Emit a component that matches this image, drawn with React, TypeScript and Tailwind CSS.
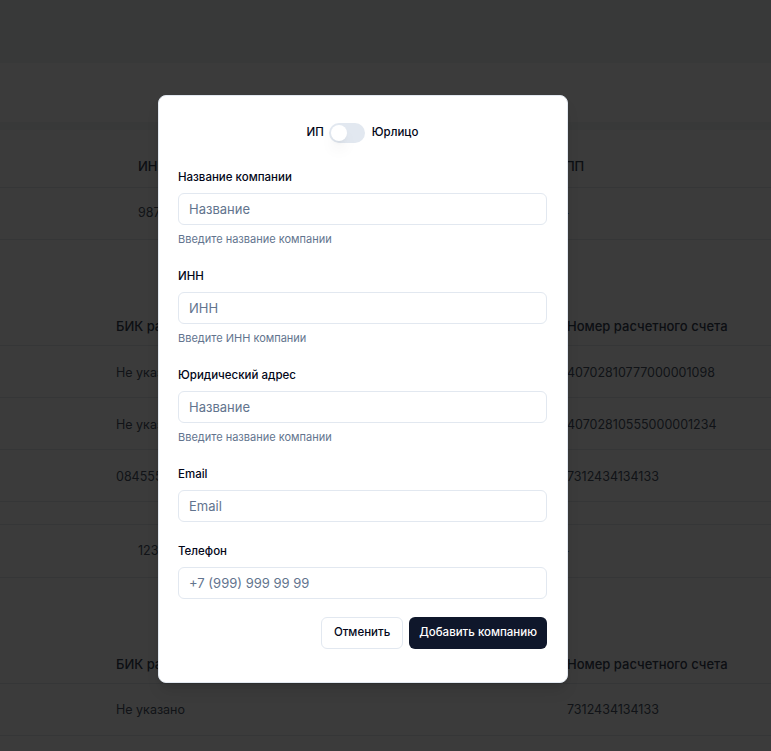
import { useState } from "react";

const font = { fontFamily: "Inter, 'Noto Sans', sans-serif" };

const BIK_ROWS = [
  { bik: "Не указано", account: "40702810777000001098" },
  { bik: "Не указано", account: "40702810555000001234" },
  { bik: "084555123", account: "7312434134133" },
];

function Field({ label, placeholder, hint }: { label: string; placeholder: string; hint?: string }) {
  return (
    <div className="flex flex-col">
      <label className="text-[11.5px] leading-4 font-medium text-slate-950 mb-2">{label}</label>
      <input
        placeholder={placeholder}
        className="h-8 w-full rounded-md border border-slate-200 bg-white px-2.5 text-[13px] text-slate-900 placeholder:text-slate-500 outline-none"
      />
      {hint && <p className="mt-1.5 text-[11px] leading-4 text-slate-500">{hint}</p>}
    </div>
  );
}

export default function App() {
  const [legal, setLegal] = useState(false);

  return (
    <div className="relative h-[751px] w-full overflow-hidden bg-white text-[12.5px] text-gray-600" style={font}>
      {/* page behind the dialog */}
      <div className="h-[63px] bg-gray-100" />
      <div className="h-[59px] bg-white" />
      <div className="h-[8px] bg-gray-100" />

      <div className="grid grid-cols-[418px_1fr] pl-[138px] pt-4 h-[58px] items-center border-b border-gray-200 text-[13px] font-medium text-gray-700">
        <span>ИНН</span>
        <span>КПП</span>
      </div>
      <div className="grid grid-cols-[418px_1fr] pl-[138px] h-[52px] items-center border-b border-gray-200">
        <span>9876543210</span>
        <span>—</span>
      </div>

      <div className="h-[60px]" />

      <div className="grid grid-cols-[451px_1fr] pl-[116px] pt-2 h-[46px] items-center border-b border-gray-200 text-[13px] font-medium text-gray-700">
        <span>БИК расчетного счета</span>
        <span>Номер расчетного счета</span>
      </div>
      {BIK_ROWS.map((r, i) => (
        <div key={i} className="grid grid-cols-[451px_1fr] pl-[116px] pt-1 h-[52px] items-center border-b border-gray-200">
          <span>{r.bik}</span>
          <span>{r.account}</span>
        </div>
      ))}
      <div className="h-[23px] border-b border-gray-200" />
      <div className="grid grid-cols-[418px_1fr] pl-[138px] h-[53px] items-center border-b border-gray-200">
        <span>1234567890</span>
        <span>—</span>
      </div>

      <div className="h-[61px]" />

      <div className="grid grid-cols-[451px_1fr] pl-[116px] pt-2 h-[45px] items-center border-b border-gray-200 text-[13px] font-medium text-gray-700">
        <span>БИК расчетного счета</span>
        <span>Номер расчетного счета</span>
      </div>
      <div className="grid grid-cols-[451px_1fr] pl-[116px] pt-0.5 h-[52px] items-center border-b border-gray-200">
        <span>Не указано</span>
        <span>7312434134133</span>
      </div>

      {/* overlay */}
      <div className="absolute inset-0 bg-black/[0.77]" />

      {/* dialog */}
      <div className="absolute left-[158px] top-[95px] w-[410px] rounded-lg border border-slate-200 bg-white pl-[19px] pr-5 pt-[27px] pb-[33px] shadow-lg">
        <div className="flex h-5 items-center justify-center gap-[5px] text-[11.5px] font-medium text-slate-950">
          <span>ИП</span>
          <button
            onClick={() => setLegal(!legal)}
            className={`relative h-5 w-9 rounded-full ${legal ? "bg-slate-900" : "bg-slate-200"}`}
          >
            <span
              className={`absolute top-0.5 h-4 w-4 rounded-full bg-white shadow-lg ${legal ? "left-[18px]" : "left-0.5"}`}
            />
          </button>
          <span className="ml-[2px]">Юрлицо</span>
        </div>

        <div className="mt-[26px] flex flex-col gap-[21px]">
          <Field label="Название компании" placeholder="Название" hint="Введите название компании" />
          <Field label="ИНН" placeholder="ИНН" hint="Введите ИНН компании" />
          <Field label="Юридический адрес" placeholder="Название" hint="Введите название компании" />
          <Field label="Email" placeholder="Email" />
          <Field label="Телефон" placeholder="+7 (999) 999 99 99" />
        </div>

        <div className="mt-[18px] flex justify-end gap-1.5">
          <button className="h-8 rounded-md border border-slate-200 bg-white px-3 text-[11.5px] font-medium text-slate-950">
            Отменить
          </button>
          <button className="h-8 rounded-md bg-slate-900 px-2.5 text-[11.5px] font-medium text-white">
            Добавить компанию
          </button>
        </div>
      </div>
    </div>
  );
}
